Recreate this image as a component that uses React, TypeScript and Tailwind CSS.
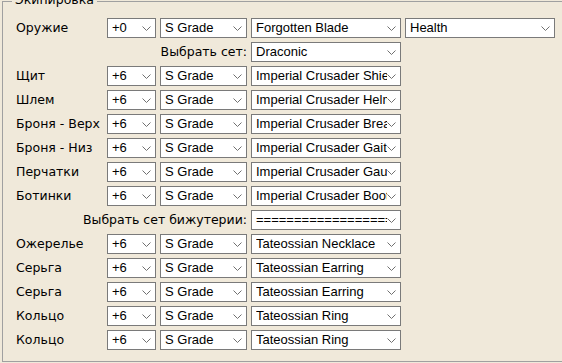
import { ReactNode } from 'react';

const font = { fontFamily: '"Liberation Sans", Arial, sans-serif' };
const labelFont = { fontFamily: '"DejaVu Sans", Verdana, sans-serif' };

function Chevron() {
    return (
        <svg width="9" height="5" viewBox="0 0 9 5" className="shrink-0">
            <polyline points="0.5,0.5 4.5,4.5 8.5,0.5" fill="none" stroke="#707070" strokeWidth="1" />
        </svg>
    );
}

function Select({ value, w }: { value: string; w: string }) {
    return (
        <div className={`${w} h-[20px] ml-[4px] shrink-0 flex items-center bg-white border border-[#7a7a7a] pl-[4px] pr-[4px]`}>
            <span className="flex-1 overflow-hidden whitespace-nowrap text-[13px] leading-[18px] text-black">{value}</span>
            <Chevron />
        </div>
    );
}

function Row({ label, children }: { label: ReactNode; children: ReactNode }) {
    return (
        <div className="flex h-[20px] mb-[4px] items-center">
            <div className="w-[91px] shrink-0 whitespace-nowrap text-[12.5px] text-black" style={labelFont}>{label}</div>
            {children}
        </div>
    );
}

function SetRow({ label, value }: { label: string; value: string }) {
    return (
        <div className="flex h-[20px] mb-[4px] items-center">
            <div className="w-[231px] shrink-0 text-right whitespace-nowrap text-[12.5px] text-black" style={labelFont}>{label}</div>
            <Select value={value} w="w-[150px]" />
        </div>
    );
}

const armor = [
    ['Щит', 'Imperial Crusader Shield'],
    ['Шлем', 'Imperial Crusader Helmet'],
    ['Броня - Верх', 'Imperial Crusader Breastplate'],
    ['Броня - Низ', 'Imperial Crusader Gaiters'],
    ['Перчатки', 'Imperial Crusader Gauntlets'],
    ['Ботинки', 'Imperial Crusader Boots'],
];

const jewels = [
    ['Ожерелье', 'Tateossian Necklace'],
    ['Серьга', 'Tateossian Earring'],
    ['Серьга', 'Tateossian Earring'],
    ['Кольцо', 'Tateossian Ring'],
    ['Кольцо', 'Tateossian Ring'],
];

export default function App() {
    return (
        <div className="w-[562px] h-[363px] overflow-hidden bg-[#f0e9da] pt-[1px] pl-[2px]" style={font}>
            <div className="relative w-[620px] h-[361px] border border-[#a0a0a0] pt-[16px] pl-[13px]">
                {/* group caption sits on the top border, mostly cut off */}
                <div className="absolute top-[-10px] left-[9px] px-[3px] bg-[#f0e9da] text-[12.5px] text-black leading-[15px]" style={labelFont}>Экипировка</div>

                <Row label="Оружие">
                    <Select value="+0" w="w-[49px] !ml-0" />
                    <Select value="S Grade" w="w-[87px]" />
                    <Select value="Forgotten Blade" w="w-[150px]" />
                    <Select value="Health" w="w-[150px]" />
                </Row>
                <SetRow label="Выбрать сет:" value="Draconic" />

                {armor.map(([label, item], i) => (
                    <Row key={'a' + i} label={label}>
                        <Select value="+6" w="w-[49px] !ml-0" />
                        <Select value="S Grade" w="w-[87px]" />
                        <Select value={item} w="w-[150px]" />
                    </Row>
                ))}

                <SetRow label="Выбрать сет бижутерии:" value="========================" />

                {jewels.map(([label, item], i) => (
                    <Row key={'j' + i} label={label}>
                        <Select value="+6" w="w-[49px] !ml-0" />
                        <Select value="S Grade" w="w-[87px]" />
                        <Select value={item} w="w-[150px]" />
                    </Row>
                ))}
            </div>
        </div>
    );
}
